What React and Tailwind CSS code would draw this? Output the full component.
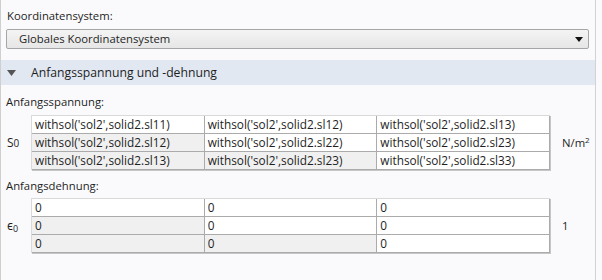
const SIGMA = [
  ['withsol(\'sol2\',solid2.sl11)', 'withsol(\'sol2\',solid2.sl12)', 'withsol(\'sol2\',solid2.sl13)'],
  ['withsol(\'sol2\',solid2.sl12)', 'withsol(\'sol2\',solid2.sl22)', 'withsol(\'sol2\',solid2.sl23)'],
  ['withsol(\'sol2\',solid2.sl13)', 'withsol(\'sol2\',solid2.sl23)', 'withsol(\'sol2\',solid2.sl33)'],
]

const EPS = [
  ['0', '0', '0'],
  ['0', '0', '0'],
  ['0', '0', '0'],
]

function Matrix({ rows }) {
  return (
    <div className="w-[519px] border-t border-l border-[#d9d9d9] shadow-[1px_1px_0_#c6c6c6] text-[11.8px]">
      {rows.map((row, r) => (
        <div key={r} className="grid grid-cols-3">
          {row.map((v, c) => (
            <div
              key={c}
              className={`h-[18px] border-r border-b border-[#ababab] pl-[3px] leading-[17px] truncate ${
                c < r ? 'bg-[#f0f0f0]' : 'bg-white'
              }`}
            >
              {v}
            </div>
          ))}
        </div>
      ))}
    </div>
  )
}

export default function App() {
  return (
    <div
      className="w-[602px] h-[280px] bg-[#fafafc] border-l border-[#cfcfcf] text-[11.3px] text-[#1e1e1e] overflow-hidden"
      style={{ fontFamily: '"Open Sans", "Noto Sans", sans-serif' }}
    >
      <div className="w-[595px] h-full border-r border-[#d2d2d2]">
        {/* Coordinate system */}
        <div className="pl-[6px] pt-[8px] leading-[16px]">Koordinatensystem:</div>
        <div className="ml-[5px] mt-[5px] w-[583px] h-[20px] rounded-[2px] border border-[#a6a6a6] bg-gradient-to-b from-[#f4f4f4] to-[#e6e6e6] flex items-center justify-between pl-[12px] pr-[5px]">
          <span className="leading-[16px]">Globales Koordinatensystem</span>
          <svg width="8" height="5" viewBox="0 0 8 5">
            <path d="M0 0h8L4 5z" fill="#111" />
          </svg>
        </div>

        {/* Section header */}
        <div className="mt-[11px] h-[25px] bg-[#e1e8f2] flex items-center pl-[6px]">
          <svg width="9" height="6" viewBox="0 0 9 6">
            <path d="M0 0h9L4.5 6z" fill="#555" />
          </svg>
          <span className="ml-[15px] text-[12.2px] leading-[18px]">Anfangsspannung und -dehnung</span>
        </div>

        {/* Initial stress */}
        <div className="pl-[5px] mt-[9px] leading-[16px]">Anfangsspannung:</div>
        <div className="mt-[5px] flex items-center">
          <div className="w-[30px] pl-[6px] leading-[16px] text-[12px]">
            S<span className="text-[10px]">0</span>
          </div>
          <Matrix rows={SIGMA} />
          <div className="pl-[12px] leading-[16px]">
            N/m<sup className="text-[8px]">2</sup>
          </div>
        </div>

        {/* Initial strain */}
        <div className="pl-[5px] mt-[8px] leading-[16px]">Anfangsdehnung:</div>
        <div className="mt-[4px] flex items-center">
          <div className="w-[30px] pl-[6px] leading-[16px] text-[12px]">
            ϵ<sub className="text-[9px]">0</sub>
          </div>
          <Matrix rows={EPS} />
          <div className="pl-[12px] leading-[16px]">1</div>
        </div>
      </div>
    </div>
  )
}
